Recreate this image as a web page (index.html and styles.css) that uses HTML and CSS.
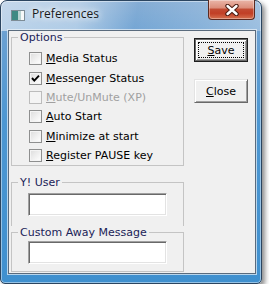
FILE: index.html
```html
<!DOCTYPE html>
<html>
<head>
<meta charset="utf-8">
<link rel="stylesheet" href="styles.css">
</head>
<body>
<div class="window">
  <div class="titlebar">
    <svg class="app-icon" width="14" height="11" viewBox="0 0 14 11">
      <rect x="0.5" y="0.5" width="13" height="10" fill="#eef2f4" stroke="#7d8c96"/>
      <rect x="1" y="1" width="6" height="9" fill="#3f8a84"/>
      <rect x="7" y="1" width="3" height="9" fill="#b9d3d2"/>
      <rect x="10" y="1" width="3" height="9" fill="#f6f8f8"/>
    </svg>
    <span class="title">Preferences</span>
    <div class="close-btn">
      <svg width="16" height="12" viewBox="0 0 16 12">
        <path d="M3.5 2 L12.5 10 M12.5 2 L3.5 10" stroke="#4a1c12" stroke-width="4.4" stroke-linecap="round"/>
        <path d="M3.5 2 L12.5 10 M12.5 2 L3.5 10" stroke="#ffffff" stroke-width="2.4" stroke-linecap="round"/>
      </svg>
    </div>
  </div>
  <div class="client">
    <div class="left-col">
      <fieldset class="group options">
        <legend>Options</legend>
        <label class="check-row"><span class="box"></span><span><u>M</u>edia Status</span></label>
        <label class="check-row"><span class="box checked"><svg width="11" height="11" viewBox="0 0 11 11"><path d="M2 5 L4.3 7.6 L9 2.6" fill="none" stroke="#000" stroke-width="1.9"/></svg></span><span><u>M</u>essenger Status</span></label>
        <label class="check-row disabled"><span class="box"></span><span><u>M</u>ute/UnMute (XP)</span></label>
        <label class="check-row"><span class="box"></span><span><u>A</u>uto Start</span></label>
        <label class="check-row"><span class="box"></span><span><u>M</u>inimize at start</span></label>
        <label class="check-row"><span class="box"></span><span><u>R</u>egister PAUSE key</span></label>
      </fieldset>
      <fieldset class="group user">
        <legend>Y! User</legend>
        <div class="textbox"></div>
      </fieldset>
      <fieldset class="group away">
        <legend>Custom Away Message</legend>
        <div class="textbox"></div>
      </fieldset>
    </div>
    <div class="right-col">
      <div class="btn default"><span class="focus"><u>S</u>ave</span></div>
      <div class="btn"><u>C</u>lose</div>
    </div>
  </div>
</div>
</body>
</html>
```
FILE: styles.css
```css
html, body {
  margin: 0;
  padding: 0;
  background: #ffffff;
}
body {
  font-family: "DejaVu Sans", Verdana, sans-serif;
  font-size: 11px;
}
.window {
  box-sizing: border-box;
  width: 262px;
  height: 284px;
  border: 1px solid #2b4560;
  border-radius: 7px 7px 5px 5px;
  padding: 0 5px 9px 7px;
  display: flex;
  flex-direction: column;
  background:
    linear-gradient(100deg, rgba(255,255,255,0.55) 0%, rgba(255,255,255,0.45) 30%, rgba(255,255,255,0.05) 52%, rgba(255,255,255,0.18) 78%, rgba(255,255,255,0.32) 100%) top / 100% 30px no-repeat,
    linear-gradient(180deg, #7fa9d3 0, #6aa0d2 35px, #4d97d2 120px, #3f90cf 100%);
  box-shadow: inset 0 0 0 1px rgba(255,255,255,0.45), 3px 3px 5px rgba(0,0,0,0.45);
}
.titlebar {
  height: 29px;
  display: flex;
  align-items: flex-start;
}
.app-icon {
  margin: 9px 0 0 3px;
  flex: none;
}
.title {
  margin: 5px 0 0 7px;
  font-family: "Open Sans", "Noto Sans", sans-serif;
  font-size: 12px;
  line-height: 16px;
  color: #1a1a1a;
  text-shadow: 0 0 6px #ffffff, 0 0 10px #ffffff;
}
.close-btn {
  box-sizing: border-box;
  margin: -1px 1px 0 auto;
  width: 47px;
  height: 20px;
  border: 1px solid #5c2a20;
  border-top: none;
  border-radius: 0 0 4px 4px;
  background: linear-gradient(180deg, #eab6a8 0%, #dc8f7c 40%, #c24a31 50%, #c13f26 70%, #d6714f 100%);
  box-shadow: inset 0 0 0 1px rgba(255,255,255,0.35);
  display: flex;
  align-items: center;
  justify-content: center;
}
.client {
  flex: 1;
  box-sizing: border-box;
  background: #f0f0f0;
  border: 1px solid #5a6b7d;
  box-shadow: 0 0 0 1px rgba(235,242,248,0.7);
  display: grid;
  grid-template-columns: 173px 54px;
  column-gap: 10px;
  align-items: start;
  padding: 0 0 0 2px;
  color: #000;
}
.left-col {
  display: flex;
  flex-direction: column;
}
.group {
  margin: 0;
  min-width: 0;
  border: 1px solid #c4c4c4;
}
.group legend {
  padding: 0 2px;
  line-height: 13px;
  color: #1b2358;
}
.options {
  padding: 5px 0 0 17px;
}
.options legend {
  margin-left: -11px;
}
.user {
  margin-top: 10px;
  border-bottom: none;
  padding: 4px 0 10px 16px;
}
.away {
  padding: 2px 0 7px 16px;
}
.user legend, .away legend {
  margin-left: -10px;
}
.check-row {
  display: flex;
  align-items: center;
  height: 19.4px;
  gap: 4px;
  line-height: 13px;
}
.check-row u, .btn u {
  text-underline-offset: 1px;
}
.box {
  box-sizing: border-box;
  width: 13px;
  height: 13px;
  border: 1px solid #8e8f8f;
  background: linear-gradient(135deg, #dcdcdc 0%, #f2f2f2 60%, #ffffff 100%);
  box-shadow: inset 0 0 0 1px #f4f4f4;
  display: flex;
  align-items: center;
  justify-content: center;
  flex: none;
}
.box svg {
  display: block;
}
.disabled {
  color: #a0a0a0;
}
.disabled .box {
  border-color: #bcbcbc;
  background: #f4f4f4;
}
.textbox {
  box-sizing: border-box;
  width: 139px;
  height: 23px;
  background: #ffffff;
  border: 1px solid;
  border-color: #a0a0a0 #ffffff #ffffff #a0a0a0;
  box-shadow: inset 1px 1px 0 #696969, inset -1px -1px 0 #e3e3e3;
}
.right-col {
  padding-top: 7px;
  display: flex;
  flex-direction: column;
  gap: 17px;
}
.btn {
  box-sizing: border-box;
  width: 54px;
  height: 24px;
  background: #f0f0f0;
  border: 1px solid;
  border-color: #e3e3e3 #696969 #696969 #e3e3e3;
  box-shadow: inset 1px 1px 0 #ffffff, inset -1px -1px 0 #a0a0a0;
  display: flex;
  align-items: center;
  justify-content: center;
  line-height: 13px;
}
.btn.default {
  border: 1px solid #1e1e1e;
  box-shadow: inset 1px 1px 0 #6a6a6a, inset -1px -1px 0 #6a6a6a, inset 2px 2px 0 #ffffff, inset -2px -2px 0 #a0a0a0;
  padding: 3px;
}
.focus {
  flex: 1;
  align-self: stretch;
  display: flex;
  align-items: center;
  justify-content: center;
  border: 1px dotted #000;
}
```
